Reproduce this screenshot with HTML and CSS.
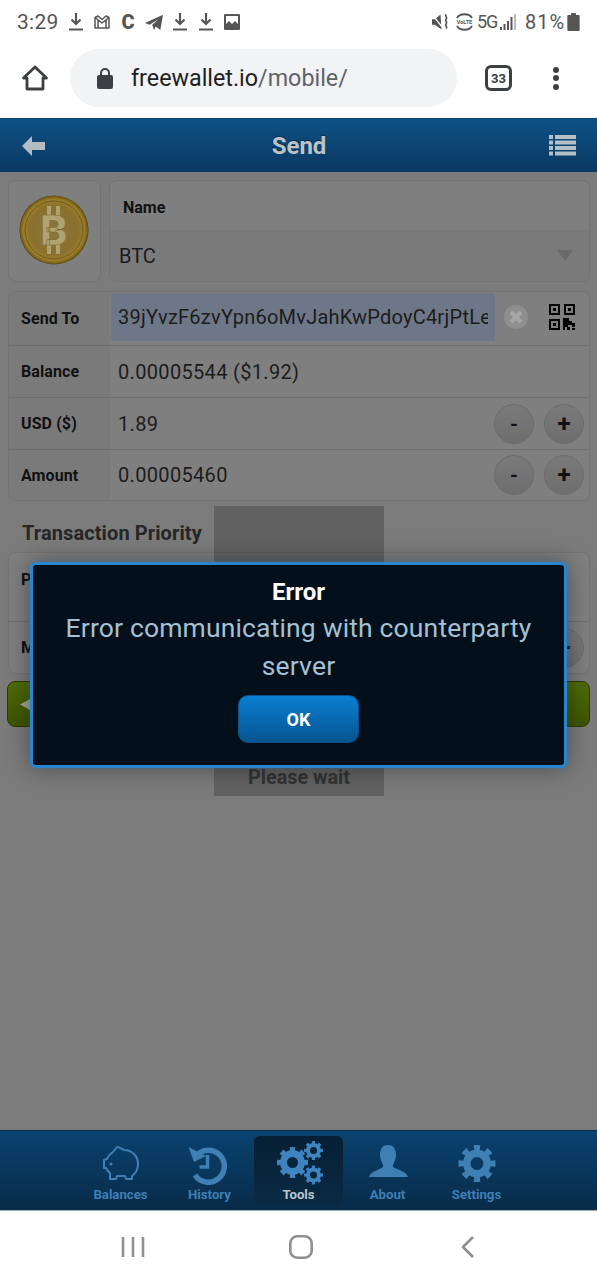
FILE: index.html
```html
<!DOCTYPE html>
<html lang="en">
<head>
<meta charset="utf-8">
<title>Send</title>
<link rel="stylesheet" href="styles.css">
</head>
<body>
<div class="phone">
  <div class="statusbar">
    <span class="clock">3:29</span>
    <div class="status-icons">
      <svg class="si" viewBox="0 0 18 20"><path d="M9 1v10M4.500 7.500 9 12l4.500-4.500M2 17.500h14" /></svg>
      <svg class="si" viewBox="0 0 18 20"><path class="thin" d="M2 16V5.500L9 11l7-5.500V16H2ZM2 5.500 5 4l4 3.500L13 4l3 1.500M5 16V8M13 16V8"/></svg>
      <span class="c-glyph">C</span>
      <svg class="si wide" viewBox="0 0 20 20"><path class="solid" d="M0 11 20 2l-3 17-5-4-2 4-2-6L15 7 5 13Z"/></svg>
      <svg class="si" viewBox="0 0 18 20"><path d="M9 1v10M4.500 7.500 9 12l4.500-4.500M2 17.500h14" /></svg>
      <svg class="si" viewBox="0 0 18 20"><path d="M9 1v10M4.500 7.500 9 12l4.500-4.500M2 17.500h14" /></svg>
      <svg class="si" viewBox="0 0 18 18"><path class="solid" fill-rule="evenodd" d="M2 1h14a1 1 0 0 1 1 1v14a1 1 0 0 1-1 1H2a1 1 0 0 1-1-1V2a1 1 0 0 1 1-1Zm1 2v8l3-3 3 3 3-3 3 3V3H3Z"/><circle class="solid" cx="6" cy="6" r="1.700"/></svg>
    </div>
    <div class="status-right">
      <svg class="sr-mute" viewBox="0 0 18 18"><path class="solid" d="M0 6h3l6-5 1 16-7-5H0Z"/><path class="slash" d="M1 2l11 14"/><path class="thin" d="M15 1c-2 2 2 3 0 5s2 3 0 5 2 3 0 5"/></svg>
      <svg class="sr-volte" viewBox="0 0 17 18"><path class="thin" d="M1 5c3-5 12-5 15 0M1 13c3 5 12 5 15 0"/><text x="8.500" y="11" class="volte-text">VoLTE</text></svg>
      <span class="net">5G</span>
      <svg class="sr-signal" viewBox="0 0 16 18"><rect x="0" y="14" width="2" height="3"/><rect x="3.500" y="11" width="2" height="6"/><rect x="7" y="8" width="2" height="9"/><rect x="10.500" y="4" width="2" height="13"/><rect class="off" x="14" y="1" width="2" height="16"/></svg>
      <span class="pct">81%</span>
      <svg class="sr-batt" viewBox="0 0 13 19"><path class="solid" d="M4 0h5v2h3a1 1 0 0 1 1 1v15a1 1 0 0 1-1 1H1a1 1 0 0 1-1-1V3a1 1 0 0 1 1-1h3Z"/></svg>
    </div>
  </div>

  <div class="chrome">
    <svg class="home" viewBox="0 0 28 28"><path d="M14 3 2.500 14H6v11h16V14h3.500Z"/></svg>
    <div class="urlbar">
      <svg class="lock" viewBox="0 0 16 21"><path class="solid" fill-rule="evenodd" d="M2 7h1V5a5 5 0 0 1 10 0v2h1a2 2 0 0 1 2 2v10a2 2 0 0 1-2 2H2a2 2 0 0 1-2-2V9a2 2 0 0 1 2-2Zm3 0h6V5a3 3 0 0 0-6 0Z"/></svg>
      <span class="url">freewallet.io<span class="url-path">/mobile/</span></span>
    </div>
    <span class="tabcount">33</span>
    <div class="dots"><i></i><i></i><i></i></div>
  </div>

  <header class="appbar">
    <svg class="back" viewBox="0 0 23 20"><path d="M0 10 10 0v6h13v8H10v6Z"/></svg>
    <h1 class="title">Send</h1>
    <svg class="listicon" viewBox="0 0 27 21"><path d="M0 0h4v4H0ZM6 0h21v4H6ZM0 5.500h4v4H0ZM6 5.500h21v4H6ZM0 11h4v4H0ZM6 11h21v4H6ZM0 16.500h4v4H0ZM6 16.500h21v4H6Z"/></svg>
  </header>

  <main class="content">
    <div class="top-row">
      <div class="card coin-card">
        <svg class="coin" viewBox="0 0 70 70">
          <defs><radialGradient id="gold"><stop offset="0" stop-color="#8a7640"/><stop offset=".7" stop-color="#8a702c"/><stop offset=".88" stop-color="#9c7f2b"/><stop offset=".97" stop-color="#775d15"/><stop offset="1" stop-color="#4a3b0e"/></radialGradient></defs>
          <circle cx="35" cy="35" r="34.500" fill="url(#gold)"/>
          <circle cx="35" cy="35" r="29" fill="none" stroke="#705b1d" stroke-width="1"/>
          <path d="M30 11v10M39 11v10M30 49v10M39 49v10" stroke="#b0a271" stroke-width="4"/>
          <text x="35" y="50" class="coin-b">B</text>
        </svg>
      </div>
      <div class="card name-card">
        <div class="name-label">Name</div>
        <div class="name-select"><span>BTC</span><i class="caret"></i></div>
      </div>
    </div>

    <div class="card group">
      <div class="row row-first">
        <div class="label">Send To</div>
        <div class="value">
          <span class="address"><span class="address-text">39jYvzF6zvYpn6oMvJahKwPdoyC4rjPtLeXq</span></span>
          <span class="clear">
            <svg viewBox="0 0 24 24"><path d="M7 7l10 10M17 7 7 17"/></svg>
          </span>
          <svg class="qr" viewBox="0 0 26 26"><path fill-rule="evenodd" d="M0 0h11v11H0Zm2 2v7h7V2Zm2 2h3v3H4ZM15 0h11v11H15Zm2 2v7h7V2Zm2 2h3v3h-3ZM0 15h11v11H0Zm2 2v7h7v-7Zm2 2h3v3H4ZM14 14h6v3h3v2h3v4h-3v-2h-4v2h2v3h-3v-3h-2v3h-2Zm9 10h3v2h-3Z"/></svg>
        </div>
      </div>
      <div class="row row-bal">
        <div class="label">Balance</div>
        <div class="value">0.00005544 ($1.92)</div>
      </div>
      <div class="row row-bal">
        <div class="label">USD ($)</div>
        <div class="value"><span class="grow">1.89</span><button class="round">-</button><button class="round plus">+</button></div>
      </div>
      <div class="row row-bal">
        <div class="label">Amount</div>
        <div class="value"><span class="grow">0.00005460</span><button class="round">-</button><button class="round plus">+</button></div>
      </div>
    </div>

    <h2 class="section">Transaction Priority</h2>

    <div class="card group prio">
      <div class="row row-prio"><div class="label">Priority</div><div class="value"></div></div>
      <div class="row row-prio"><div class="label">Miner Fee</div><div class="value"><span class="grow"></span><button class="round plus">+</button></div></div>
    </div>

    <div class="green-btn">
      <svg class="green-arrow" viewBox="0 0 10 11"><path d="M0 5.500 10 0v11Z"/></svg>
    </div>

    <div class="loading"><span>Please wait</span></div>

    <div class="dialog">
      <div class="dialog-title">Error</div>
      <p class="dialog-msg">Error communicating with counterparty server</p>
      <button class="ok">OK</button>
    </div>
  </main>

  <nav class="tabs">
    <div class="tab">
      <svg class="tab-icon" viewBox="0 0 40 40"><path class="tab-line" d="M16 2c3 0 5 2 7 3 8 0 14 6 14 14 0 6-3 10-6 12v3h-6l-1-3h-8l-1 3h-6v-6c-2-1-3-3-4-5H3v-8l3-1c1-3 3-5 6-7Z"/><circle cx="10" cy="19" r="1.500" class="tab-fill"/></svg>
      <span>Balances</span>
    </div>
    <div class="tab">
      <svg class="tab-icon" viewBox="0 0 40 40"><path class="tab-arc" d="M6 11a16 16 0 1 1-1 19"/><path class="tab-fill" d="M-1.500 2 16 11 4 17Z"/><path class="tab-hand" d="M17.500 10v12h-8"/></svg>
      <span>History</span>
    </div>
    <div class="tab active">
      <svg class="tab-icon tools" viewBox="0 0 48 44">
        <g transform="translate(17.500 21.500)"><circle r="12.500" class="gear-teeth big-teeth" pathLength="16"/><circle r="9" class="gear-ring big-ring"/></g>
        <g transform="translate(38.500 9.500)"><circle r="7.500" class="gear-teeth small-teeth" pathLength="16"/><circle r="5.500" class="gear-ring small-ring"/></g>
        <g transform="translate(38.500 34)"><circle r="7.500" class="gear-teeth small-teeth" pathLength="16"/><circle r="5.500" class="gear-ring small-ring"/></g>
      </svg>
      <span>Tools</span>
    </div>
    <div class="tab">
      <svg class="tab-icon" viewBox="0 0 40 40"><path class="tab-fill" d="M20 0c6 0 8 5 8 10 0 4-2 7-3 10v2c5 3 13 4 15 10H1c2-6 10-7 14-10v-2c-1-3-3-6-3-10 0-5 2-10 8-10Z"/></svg>
      <span>About</span>
    </div>
    <div class="tab">
      <svg class="tab-icon" viewBox="0 0 40 40"><g transform="translate(20 18.500)"><circle r="15.500" class="gear-teeth setting-teeth" pathLength="16"/><circle r="10.250" class="gear-ring setting-ring"/></g></svg>
      <span>Settings</span>
    </div>
  </nav>

  <div class="navbar">
    <svg class="nav-icon" viewBox="0 0 24 24"><path d="M2 2v20M12 2v20M22 2v20"/></svg>
    <svg class="nav-icon" viewBox="0 0 24 24"><rect x="1.300" y="1.300" width="21.400" height="21.400" rx="7"/></svg>
    <svg class="nav-icon" viewBox="0 0 24 24"><path d="M17 2 7 12l10 10"/></svg>
  </div>
</div>
</body>
</html>
```
FILE: styles.css
```css
* { box-sizing: border-box; }
html, body { margin: 0; padding: 0; }
body { font-family: Roboto, "Liberation Sans", sans-serif; background: #fff; }
.phone { width: 597px; height: 1280px; display: flex; flex-direction: column; overflow: hidden; }

/* status bar */
.statusbar { height: 38px; flex: none; display: flex; align-items: center; padding: 5px 17px 0 17px; color: #555; }
.clock { font-size: 21px; width: 50px; letter-spacing: .3px; }
.status-icons { display: flex; align-items: center; gap: 8px; }
.si { width: 18px; height: 20px; fill: none; stroke: #555; stroke-width: 2.200; overflow: visible; }
.si .thin { stroke-width: 1.500; stroke-linejoin: round; }
.si .solid { fill: #555; stroke: none; }
.si circle.solid { fill: #fff; }
.c-glyph { font-size: 20px; font-weight: 900; width: 18px; text-align: center; color: #555; line-height: 20px; }
.status-right { margin-left: auto; display: flex; align-items: center; color: #555; }
.sr-mute { width: 17px; height: 18px; margin-right: 7px; }
.sr-mute .solid { fill: #555; }
.sr-mute .slash { fill: none; stroke: #fff; stroke-width: 1.500; }
.thin { fill: none; stroke: #555; stroke-width: 1.800; }
.sr-volte { width: 17px; height: 18px; margin-right: 4px; }
.volte-text { font-size: 5.500px; font-weight: 700; text-anchor: middle; fill: #555; }
.net { font-size: 18px; width: 19px; letter-spacing: -1px; }
.sr-signal { width: 16px; height: 18px; margin: 0 9px 0 4px; fill: #555; }
.sr-signal .off { fill: #bbb; }
.pct { font-size: 20px; letter-spacing: 1px; width: 39px; }
.sr-batt { width: 13px; height: 18px; margin-left: 3px; }
.sr-batt .solid { fill: #555; }

/* browser chrome */
.chrome { height: 80px; flex: none; display: flex; align-items: center; padding-left: 21px; background: #fff; }
.home { width: 28px; height: 28px; fill: none; stroke: #3c4043; stroke-width: 2.800; stroke-linejoin: round; }
.urlbar { margin-left: 21px; width: 387px; height: 58px; border-radius: 29px; background: #f1f3f4; display: flex; align-items: center; padding-left: 27px; }
.lock { width: 16px; height: 21px; }
.lock .solid { fill: #3c4043; }
.url { font-size: 23.300px; margin-left: 18px; color: #202124; }
.url-path { color: #5f6368; }
.tabcount { margin-left: 28px; width: 27px; height: 26px; border: 3px solid #3c4043; border-radius: 6px; font-size: 13px; font-weight: 700; color: #3c4043; display: flex; align-items: center; justify-content: center; }
.dots { margin-left: 41px; display: flex; flex-direction: column; gap: 2.500px; }
.dots i { width: 6px; height: 6px; background: #3c4043; border-radius: 50%; display: block; }

/* app bar */
.appbar { height: 54px; flex: none; display: flex; align-items: center; justify-content: space-between; padding: 0 21px 0 22px; background: linear-gradient(#0e5186, #0a3861); border-top: 1px solid #0b4a6e; }
.back { width: 23px; height: 20px; fill: #b5bcc1; }
.title { margin: 0 0 0 4px; font-size: 24px; font-weight: 700; color: #bcc3c8; text-shadow: 0 -1px 1px #062a48; }
.listicon { width: 27px; height: 21px; fill: #b5c0c8; }

/* content */
.content { flex: 1; position: relative; background: #7b7b7b; padding: 8px 7px 0 8px; color: #111; }
.card { background: #7f7f7f; border: 1px solid #737373; border-radius: 8px; }
.top-row { display: flex; gap: 8px; height: 102px; }
.coin-card { width: 93px; display: flex; align-items: center; justify-content: center; padding: 0 1px 2px 0; }
.coin { width: 70px; height: 70px; flex: none; }
.coin-b { font-family: Roboto, sans-serif; font-size: 43px; font-weight: 900; fill: #b0a271; stroke: #7d6a2c; stroke-width: .6px; text-anchor: middle; }
.name-card { flex: 1; display: flex; flex-direction: column; }
.name-label { height: 49px; padding: 17px 0 0 13px; font-size: 16px; font-weight: 700; line-height: 19px; }
.name-select { flex: 1; background: #7a7a7a; border-radius: 0 0 8px 8px; display: flex; align-items: center; justify-content: space-between; padding: 0 16px 0 9px; font-size: 20px; color: #1a1a1a; }
.caret { width: 0; height: 0; border: 8px solid transparent; border-top: 11px solid #6a6a6a; border-bottom: 0; }

.group { margin-top: 9px; overflow: hidden; }
.row { display: flex; border-top: 1px solid #6e6e6e; height: 52px; }
.row-first { border-top: 0; height: 53px; }
.row-bal:last-child { height: 51px; }
.label { width: 101px; flex: none; background: #7a7a7a; padding-left: 12px; font-size: 16px; font-weight: 700; letter-spacing: .1px; display: flex; align-items: center; color: #111; }
.value { flex: 1; display: flex; align-items: center; padding: 0 5px 0 8px; font-size: 20px; letter-spacing: .33px; color: #1c1c1c; min-width: 0; }
.row-first .value { padding: 1px 0 4px 0; }
.address { width: 384px; align-self: stretch; flex: none; background: #6d7787; padding: 0 7px 1px; margin-left: 1px; display: flex; align-items: center; overflow: hidden; white-space: nowrap; letter-spacing: .23px; }
.address-text { display: block; overflow: hidden; }
.clear { margin-left: 9px; width: 24px; height: 24px; border-radius: 50%; background: #8f8f8f; flex: none; }
.clear svg { display: block; width: 24px; height: 24px; fill: none; stroke: #a6a6a6; stroke-width: 4; }
.qr { width: 26px; height: 26px; margin-left: 21px; flex: none; fill: #000; }
.grow { flex: 1; }
.round { width: 40px; height: 40px; border-radius: 50%; border: 1px solid #6c6c6c; background: linear-gradient(#7a7a7a, #6e6e6e); padding: 0; font: 700 20px Roboto, sans-serif; color: #111; flex: none; margin-left: 10px; }
.plus { font-size: 24px; }

.section { margin: 20px 0 0 14px; font-size: 20px; line-height: 24px; letter-spacing: .1px; font-weight: 700; color: #262626; height: 24px; }
.prio { margin-top: 7px; }
.prio .row:first-child { border-top: 0; height: 68px; }
.prio .row:first-child .label { padding-bottom: 16px; }
.prio .label { background: #7f7f7f; }

.green-btn { margin: 7px 0 0 -1px; height: 46px; background: linear-gradient(#4f6c09, #3d5400); border: 1px solid #2c3a04; border-radius: 8px; display: flex; align-items: center; padding-left: 12px; }
.green-arrow { width: 10px; height: 11px; fill: #a3a98f; }

.loading { position: absolute; left: 214px; top: 334px; width: 170px; height: 290px; background: rgba(60,60,60,.4); display: flex; align-items: flex-end; justify-content: center; padding-bottom: 7px; font-size: 19.800px; font-weight: 700; color: #333; }

.dialog { position: absolute; left: 30px; top: 390px; width: 537px; height: 206px; background: #03101b; border: 3px solid #2a85cf; border-radius: 6px; box-shadow: 0 0 5px rgba(42,133,207,.35), 0 0 24px rgba(0,0,0,.4); display: flex; flex-direction: column; align-items: center; text-align: center; padding: 13px 24px 0; }
.dialog-title { font-size: 24px; font-weight: 700; color: #fff; line-height: 28px; }
.dialog-msg { margin: 3px 0 0; font-size: 26.500px; line-height: 38px; color: #a5c0d4; letter-spacing: .15px; }
.ok { margin-top: 10px; width: 121px; height: 48px; flex: none; border: 1px solid #0d4f8a; border-radius: 10px; background: linear-gradient(#0a7fd2, #05548f); color: #fff; font: 700 18px Roboto, sans-serif; }

/* tab bar */
.tabs { height: 81px; flex: none; background: linear-gradient(#0a426f, #082b49); border-top: 1px solid #0a2c4a; border-bottom: 1px solid #9db0bf; display: flex; justify-content: center; padding: 5px 0; }
.tab { width: 89px; display: flex; flex-direction: column; align-items: center; justify-content: flex-end; color: #3f7fb4; font-size: 13.200px; font-weight: 700; border-radius: 6px; padding-bottom: 2px; gap: 2px; line-height: 16px; }
.tab.active { background: linear-gradient(#071f34, #0a2a44); color: #b9c6d0; }
.tab-icon { width: 40px; height: 40px; overflow: visible; }
.tab-icon.tools { width: 48px; height: 44px; }
.tab-line { fill: none; stroke: #3f7fb4; stroke-width: 2; stroke-linejoin: round; }
.tab-fill { fill: #3f7fb4; }
.tab-arc { fill: none; stroke: #3f7fb4; stroke-width: 5.500; }
.tab-hand { fill: none; stroke: #3f7fb4; stroke-width: 3.500; }
.gear-teeth { fill: none; stroke: #3f84bf; stroke-dasharray: 1 1; stroke-dashoffset: .5; }
.big-teeth { stroke-width: 6; }
.small-teeth { stroke-width: 4; }
.gear-ring { fill: none; stroke: #3f84bf; }
.big-ring { stroke-width: 7; }
.small-ring { stroke-width: 4; }
.setting-teeth { stroke: #3f7fb4; stroke-width: 6; }
.setting-ring { stroke: #3f7fb4; stroke-width: 7.500; }

/* android nav */
.navbar { height: 69px; flex: none; background: #fff; display: flex; justify-content: space-between; align-items: center; padding: 2px 117px 0 121px; }
.nav-icon { width: 24px; height: 24px; fill: none; stroke: #8f8f8f; stroke-width: 2.600; stroke-linejoin: round; }
```
